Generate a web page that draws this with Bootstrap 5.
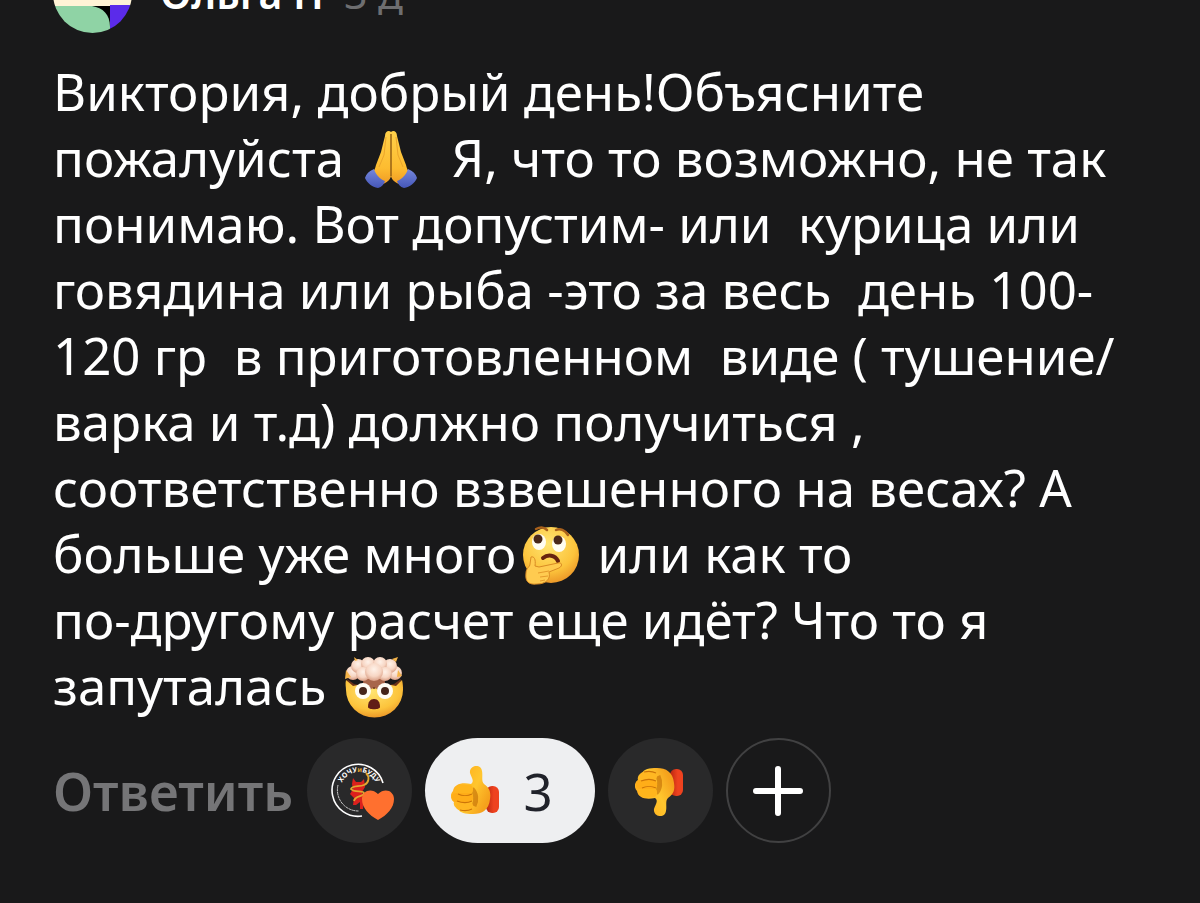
<!DOCTYPE html>
<html lang="ru">
<head>
<meta charset="utf-8">
<meta name="viewport" content="width=device-width, initial-scale=1">
<title>Комментарий</title>
<link href="https://cdn.jsdelivr.net/npm/bootstrap@5.3.0/dist/css/bootstrap.min.css" rel="stylesheet">
<style>
  body { background: #19191a; color: #fff; font-family: "Noto Sans", "Liberation Sans", sans-serif; }
  .comment { padding: 0 48px 60px 53px; }
  .comment-head { height: 33px; gap: 28px; overflow: hidden; }
  .avatar { width: 79px; height: 79px; }
  .author { font-size: 41px; line-height: 60px; padding-bottom: 10px; gap: 20px; white-space: nowrap; }
  .author a { color: #fff; font-weight: 600; }
  .author time { color: #6e6e70; }
  .comment-text { margin: 25px 0 20px; font-size: 51px; line-height: 66px; white-space: pre; }
  .emoji { width: 60px; height: 62px; margin: 0 4px; vertical-align: -13px; }
  .reply, .reply:hover { color: #757577; font-size: 52px; line-height: 60px; font-weight: 600; }
  .reply { margin-right: 14px; }
  .reactions { gap: 13px; }
  .reaction { width: 105px; height: 105px; background: #29292a; }
  .reaction-on { width: 170px; background: #eeeff1; color: #20222a; font-size: 51px; line-height: 60px; gap: 22px; }
  .reaction-add { background: transparent; border: 2px solid #414142; }
</style>
</head>
<body>
<main class="comment">
  <header class="comment-head d-flex align-items-end">
    <svg class="avatar rounded-circle flex-shrink-0" viewBox="0 0 79 79" aria-hidden="true">
      <rect width="79" height="52" fill="#fff3d6"/>
      <rect y="52" width="57" height="27" fill="#8fd3a5"/>
      <path d="M39 52h18v21C57 60 50 54 39 52z" fill="#000"/>
      <rect x="57" y="51" width="22" height="28" fill="#5b2bea"/>
    </svg>
    <div class="author d-flex">
      <a class="text-decoration-none" href="#">Ольга П</a>
      <time>3 д</time>
    </div>
  </header>

<p class="comment-text">Виктория, добрый день!Объясните
пожалуйста <svg class="emoji" viewBox="0 0 60 62" role="img" aria-label="Сложенные ладони"><defs><linearGradient id="palm" x2="0" y2="1"><stop stop-color="#ffd04a"/><stop offset=".7" stop-color="#fdbc30"/><stop offset="1" stop-color="#ef9b25"/></linearGradient><linearGradient id="cuff" x2="0" y2="1"><stop stop-color="#7487dc"/><stop offset="1" stop-color="#4556b8"/></linearGradient></defs><path d="M30 4c-2-2-6-1-6 4l-4 16-5 13c-1 4-2 6-4 8l11 11c5-2 8-5 8-9 0 4 3 7 8 9l11-11c-2-2-3-4-4-8l-5-13-4-16c0-5-4-6-6-4z" fill="url(#palm)"/><path d="M30 6v42" stroke="#8e5a12" stroke-width="1.400"/><path d="M25 9l-2 18-5 12M35 9l2 18 5 12" fill="none" stroke="#eba52b" stroke-width="1"/><path d="M13 41c-5 2-8 5-9 9 2 5 7 9 13 10 4-1 6-4 7-7-5-2-9-6-11-12zM47 41c5 2 8 5 9 9-2 5-7 9-13 10-4-1-6-4-7-7 5-2 9-6 11-12z" fill="url(#cuff)"/></svg>  Я, что то возможно, не так
понимаю. Вот допустим- или  курица или
говядина или рыба -это за весь  день 100-
120 гр  в приготовленном  виде ( тушение/
варка и т.д) должно получиться ,
соответственно взвешенного на весах? А
больше уже много<svg class="emoji" viewBox="0 0 60 62" role="img" aria-label="Задумчивое лицо"><defs><radialGradient id="face" cx=".45" cy=".3" r=".75"><stop stop-color="#ffe572"/><stop offset=".65" stop-color="#fcc43c"/><stop offset="1" stop-color="#e98f24"/></radialGradient></defs><circle cx="31" cy="31" r="28" fill="url(#face)"/><ellipse cx="19" cy="18" rx="7" ry="8" fill="#fffdf2"/><ellipse cx="39" cy="20" rx="7" ry="8" fill="#fffdf2"/><circle cx="18" cy="15" r="4.500" fill="#49281a"/><circle cx="38" cy="16" r="4.500" fill="#49281a"/><path d="M16 5c4-2 8-2 11 1M36 6c4-2 9 0 12 5" fill="none" stroke="#a9611c" stroke-width="2.500" stroke-linecap="round"/><path d="M23 34c5-4 12-3 15 3" fill="none" stroke="#67230f" stroke-width="4" stroke-linecap="round"/><path d="M11 33c3-1 5 2 4 9l4 1 19-4c4-1 5 3 1 5l-10 4c2 7-3 12-12 12C8 61 5 57 6 49c0-5 4-6 4-9z" fill="#ffcb50" stroke="#d98b24" stroke-width="1"/><path d="M18 49l11-2M20 53l8-1M20 57l5-1" stroke="#e59a2b" stroke-width="1"/></svg> или как то
по-другому расчет еще идёт? Что то я
запуталась <svg class="emoji" viewBox="0 0 60 62" role="img" aria-label="Взрыв мозга"><defs><radialGradient id="puff" cx=".5" cy=".35" r=".65"><stop stop-color="#fff2e9"/><stop offset=".6" stop-color="#f7d6c4"/><stop offset="1" stop-color="#d99f86"/></radialGradient></defs><path d="M3 23l7 5 10 2h20l10-2 7-5-2 14H5z" fill="#6b3219"/><path d="M2 24l7 6 5-1 5 4 5-3 6 3 6-3 5 3 6-4 5 1 6-6c1 4 1 7 1 10a28 27 0 0 1-57 0c0-3-1-6 0-10z" fill="url(#face)"/><path d="M20 18h20l1 9 4 4-8-1-3 4-4-3-4 3-3-4-8 1 4-4z" fill="#a8664b"/><g fill="url(#puff)"><circle cx="9" cy="17" r="7"/><circle cx="51" cy="17" r="7"/><circle cx="14" cy="10" r="7"/><circle cx="46" cy="10" r="7"/><circle cx="24" cy="8" r="7"/><circle cx="36" cy="8" r="7"/><circle cx="19" cy="18" r="7"/><circle cx="41" cy="18" r="7"/><circle cx="30" cy="16" r="9"/></g><path d="M2 14l5 7-6 2zM10 1l4 3-3 1zM48 3l6-2-2 5zM54 14l4 6-5 1z" fill="#f4b348"/><circle cx="19" cy="35" r="8" fill="#fffdf5"/><circle cx="41" cy="35" r="8" fill="#fffdf5"/><circle cx="19" cy="35" r="4" fill="#45251a"/><circle cx="41" cy="35" r="4" fill="#45251a"/><path d="M24 51c0-5 2-8 6-8s6 3 6 8c0 3-12 3-12 0z" fill="#611d16"/></svg></p>

  <footer class="d-flex align-items-center">
    <button type="button" class="reply btn border-0 p-0">Ответить</button>
    <div class="reactions d-flex">
      <button type="button" class="reaction btn border-0 rounded-circle p-0 d-flex align-items-center justify-content-center" aria-label="Нравится автору">
        <svg width="70" height="60" viewBox="-4 0 70 60">
          <defs><path id="arc" d="M12 30a19 19 0 0 1 38 0"/></defs>
          <path d="M55 22A26 26 0 1 0 34 55" fill="none" stroke="#fff" stroke-width="1.600"/>
          <path d="M10 24A21 21 0 0 0 31 50" fill="none" stroke="#c8c8c8" stroke-width="1" stroke-dasharray="3 .5"/>
          <text font-size="7" font-weight="700" fill="#fff" text-anchor="middle"><textPath href="#arc" startOffset="50%">ХОЧУ<tspan fill="#e2a32e">и</tspan>БУДУ</textPath></text>
          <path d="M25 17l3 4h5l3-3 1 8-3 5 2 6-1 11h-3v-7l-4 3h-3l1-7-4-4 3-5-1-5z" fill="#db201d"/>
          <path d="M38 12c4 4 3 10-2 12-5 2-12 0-13 4 3 4 12 1 13 4 0 4-9 2-10 8" fill="none" stroke="#e4a62f" stroke-width="1.800"/>
          <path d="M50 59C41 54 34 47 34 38c0-8 9-12 16-5 7-7 16-3 16 5 0 9-7 16-16 21z" fill="#ff702f"/>
        </svg>
      </button>
      <button type="button" class="reaction reaction-on btn border-0 rounded-pill py-0 ps-0 pe-3 d-flex align-items-center justify-content-center" aria-label="Нравится, 3">
        <svg width="50" height="50" viewBox="0 0 50 50">
          <defs>
            <linearGradient id="hand" x2="1" y2=".6"><stop stop-color="#ffa313"/><stop offset=".65" stop-color="#ffc62e"/><stop offset="1" stop-color="#f5a11c"/></linearGradient>
            <linearGradient id="sleeve"><stop stop-color="#b92710"/><stop offset=".6" stop-color="#ee421f"/></linearGradient>
          </defs>
          <g id="thumb">
            <rect x="35" y="20" width="13" height="27" rx="6" fill="url(#sleeve)"/>
            <path d="M20 18c4-3 0-7-1-11-1-8 11-10 12-2 1 5-1 10 2 13 6 4 7 9 6 15-1 11-8 15-17 15-8 0-13-1-15-5-3-1-5-4-4-7-4-3-4-8-1-11 1-7 9-9 18-7z" fill="url(#hand)"/>
            <path d="M21 23c4 4 5 11 2 17" fill="none" stroke="#c06a05" stroke-width="5" opacity=".6"/>
            <rect x="5" y="19" width="17" height="9" rx="4" fill="#ffb51c"/>
            <rect x="1" y="27" width="21" height="9" rx="4" fill="#ffad18"/>
            <rect x="5" y="36" width="17" height="8" rx="4" fill="#ffb722"/>
            <path d="M7 28c4 2 10 2 14 0M6 35c5 2 11 2 15 0M9 44c4 1 8 1 12-1" fill="none" stroke="#cc7408" stroke-width="1.200"/>
          </g>
        </svg>
        <span>3</span>
      </button>
      <button type="button" class="reaction btn border-0 rounded-circle p-0 d-flex align-items-center justify-content-center" aria-label="Не нравится">
        <svg width="50" height="50" viewBox="0 0 50 50"><use href="#thumb" transform="matrix(1 0 0 -1 0 50)"/></svg>
      </button>
      <button type="button" class="reaction reaction-add btn rounded-circle p-0 d-flex align-items-center justify-content-center" aria-label="Добавить реакцию">
        <svg width="50" height="50" viewBox="0 0 50 50"><path d="M25 3v44M3 25h44" stroke="#fff" stroke-width="6" stroke-linecap="round"/></svg>
      </button>
    </div>
  </footer>
</main>
<script src="https://cdn.jsdelivr.net/npm/bootstrap@5.3.0/dist/js/bootstrap.bundle.min.js"></script>
</body>
</html>
